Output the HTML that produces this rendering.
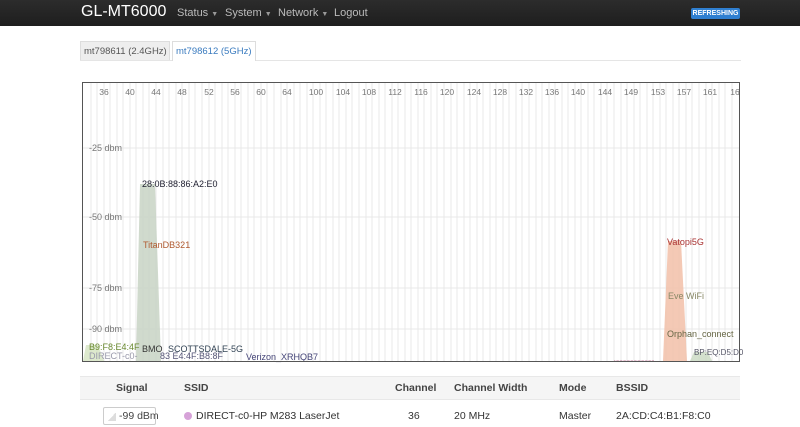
<!DOCTYPE html>
<html><head><meta charset="utf-8"><style>
*{margin:0;padding:0;box-sizing:border-box}
body{width:800px;height:427px;overflow:hidden;background:#fff;font-family:"Liberation Sans",sans-serif;font-size:12px;color:#333;position:relative}
.nav{position:absolute;left:0;top:0;width:800px;height:26px;background:linear-gradient(#2c2c2c,#1e1e1e);}
.brand{position:absolute;left:81px;top:3px;color:#fff;font-size:16px}
.menu{position:absolute;top:7px;color:#bbb;font-size:11px;white-space:nowrap}
.menu small{font-size:7px;margin-left:3px;color:#999}
.badge{position:absolute;left:691px;top:8px;width:49px;height:11px;background:#2f7fd0;color:#fff;font-size:7px;font-weight:bold;border-radius:2px;text-align:center;line-height:11px}
.tabs{position:absolute;left:80px;top:60px;width:661px;border-top:1px solid #e5e5e5}
.tab{position:absolute;top:41px;height:19px;font-size:9.5px;line-height:19px;padding:0 3px;border:1px solid #ddd;border-bottom:none;white-space:nowrap}
.hdr{position:absolute;left:80px;top:376px;width:660px;height:24px;background:#f5f5f5;border-top:1px solid #e8e8e8;border-bottom:1px solid #e8e8e8}
.t{position:absolute;font-size:10.5px;white-space:nowrap}
.b{font-weight:bold;color:#444}
</style></head><body>
<div class="nav">
<div class="brand">GL-MT6000</div>
<div class="menu" style="left:177px">Status<small>▼</small></div>
<div class="menu" style="left:225px">System<small>▼</small></div>
<div class="menu" style="left:278px">Network<small>▼</small></div>
<div class="menu" style="left:334px">Logout</div>
<div class="badge">REFRESHING</div>
</div>
<div class="tabs"></div>
<div class="tab" style="left:80px;width:90px;background:#eee;color:#555">mt798611 (2.4GHz)</div>
<div class="tab" style="left:172px;width:84px;background:#fff;color:#3a7bbf;height:20px">mt798612 (5GHz)</div>
<svg style="position:absolute;left:0;top:0" width="800" height="427" font-family="Liberation Sans" font-size="8.5">
<g stroke="#e8e8e8">
<path d="M91 83V361M97 83V361M104 83V361M110 83V361M117 83V361M123 83V361M130 83V361M136 83V361M143 83V361M149 83V361M156 83V361M163 83V361M169 83V361M176 83V361M182 83V361M189 83V361M195 83V361M202 83V361M209 83V361M215 83V361M222 83V361M228 83V361M235 83V361M241 83V361M248 83V361M254 83V361M261 83V361M267 83V361M274 83V361M281 83V361M287 83V361M294 83V361M300 83V361M307 83V361M313 83V361M320 83V361M326 83V361M333 83V361M339 83V361M346 83V361M352 83V361M359 83V361M366 83V361M372 83V361M379 83V361M385 83V361M392 83V361M398 83V361M405 83V361M411 83V361M418 83V361M424 83V361M431 83V361M437 83V361M444 83V361M451 83V361M457 83V361M464 83V361M470 83V361M477 83V361M483 83V361M490 83V361M496 83V361M503 83V361M509 83V361M516 83V361M522 83V361M529 83V361M536 83V361M542 83V361M549 83V361M555 83V361M562 83V361M568 83V361M575 83V361M581 83V361M588 83V361M594 83V361M601 83V361M607 83V361M614 83V361M621 83V361M627 83V361M634 83V361M640 83V361M647 83V361M653 83V361M660 83V361M666 83V361M673 83V361M679 83V361M686 83V361M692 83V361M699 83V361M706 83V361M712 83V361M719 83V361M725 83V361M732 83V361"/>
<path d="M83 148H739M83 217H739M83 288H739M83 329H739"/>
</g>
<g fill="#777" text-anchor="middle">
<text x="104" y="95">36</text><text x="130" y="95">40</text><text x="156" y="95">44</text><text x="182" y="95">48</text><text x="209" y="95">52</text><text x="235" y="95">56</text><text x="261" y="95">60</text><text x="287" y="95">64</text><text x="316" y="95">100</text><text x="343" y="95">104</text><text x="369" y="95">108</text><text x="395" y="95">112</text><text x="421" y="95">116</text><text x="447" y="95">120</text><text x="474" y="95">124</text><text x="500" y="95">128</text><text x="526" y="95">132</text><text x="552" y="95">136</text><text x="578" y="95">140</text><text x="605" y="95">144</text><text x="631" y="95">149</text><text x="658" y="95">153</text><text x="684" y="95">157</text><text x="710" y="95">161</text><text x="735" y="95">16</text>
</g>
<g fill="#777" font-size="9"><text x="89" y="151">-25 dbm</text><text x="89" y="220">-50 dbm</text><text x="89" y="291">-75 dbm</text><text x="89" y="332">-90 dbm</text></g>
<path d="M136 361L140 184H155L161 361Z" fill="#c8d4c4" opacity=".85"/>
<path d="M663 361L668 241H681L687 361Z" fill="#f2c0a8" opacity=".85"/>
<path d="M83 361L86 345H98L104 361Z" fill="#cfe0b8" opacity=".7"/>
<path d="M690 361L694 352H708L712 361Z" fill="#c8d8c0" opacity=".8"/>
<g font-size="9">
<text x="142" y="187" fill="#223">28:0B:88:86:A2:E0</text>
<text x="143" y="248" fill="#b05a30">TitanDB321</text>
<text x="89" y="350" fill="#6a8a30">B9:F8:E4:4F</text>
<text x="89" y="359" fill="#99a">DIRECT-c0-</text>
<text x="142" y="352" fill="#333">BMO</text>
<text x="168" y="352" fill="#345">SCOTTSDALE-5G</text>
<text x="160" y="359" fill="#557">83 E4:4F:B8:8F</text>
<text x="246" y="360" fill="#447">Verizon_XRHQB7</text>
<text x="667" y="245" fill="#a33">Vatopi5G</text>
<text x="668" y="299" fill="#886">Eve WiFi</text>
<text x="667" y="337" fill="#664">Orphan_connect</text>
<text x="694" y="355" fill="#556" font-size="8">BP:EQ:D5:D0</text>
<text x="614" y="361" fill="#a36" font-size="5">.............................</text>
</g>
<rect x="82.5" y="82.5" width="657" height="279" fill="none" stroke="#555"/>
</svg>
<div class="hdr"></div>
<div class="t b" style="left:116px;top:382px">Signal</div>
<div class="t b" style="left:184px;top:382px">SSID</div>
<div class="t b" style="left:395px;top:382px">Channel</div>
<div class="t b" style="left:454px;top:382px">Channel Width</div>
<div class="t b" style="left:559px;top:382px">Mode</div>
<div class="t b" style="left:616px;top:382px">BSSID</div>
<div style="position:absolute;left:103px;top:407px;width:53px;height:18px;border:1px solid #ccc;border-radius:2px;font-size:10.5px;line-height:16px;padding-left:15px;color:#444;white-space:nowrap">
<span style="position:absolute;left:4px;top:4px;width:8px;height:9px;background:linear-gradient(135deg,transparent 50%,#ddd 50%)"></span>-99 dBm</div>
<div style="position:absolute;left:184px;top:412px;width:8px;height:8px;border-radius:50%;background:#d6a2d8"></div>
<div class="t" style="left:196px;top:410px">DIRECT-c0-HP M283 LaserJet</div>
<div class="t" style="left:408px;top:410px">36</div>
<div class="t" style="left:454px;top:410px">20 MHz</div>
<div class="t" style="left:559px;top:410px">Master</div>
<div class="t" style="left:616px;top:410px">2A:CD:C4:B1:F8:C0</div>
</body></html>
